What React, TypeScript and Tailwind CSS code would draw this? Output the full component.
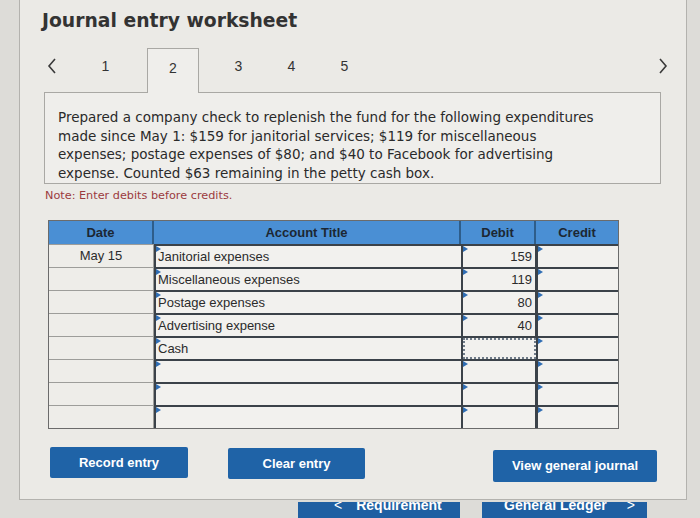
import React from 'react';

const rows = [
  { date: 'May 15', account: 'Janitorial expenses', debit: '159', credit: '' },
  { date: '', account: 'Miscellaneous expenses', debit: '119', credit: '' },
  { date: '', account: 'Postage expenses', debit: '80', credit: '' },
  { date: '', account: 'Advertising expense', debit: '40', credit: '' },
  { date: '', account: 'Cash', debit: '', credit: '' },
  { date: '', account: '', debit: '', credit: '' },
  { date: '', account: '', debit: '', credit: '' },
  { date: '', account: '', debit: '', credit: '' },
];

const Marker = () => (
  <span className="absolute left-0 top-0 h-0 w-0 border-y-[3px] border-l-[5px] border-y-transparent border-l-[#2f6db3]" />
);

const Chevron = ({ dir }: { dir: 'left' | 'right' }) => (
  <svg width="10" height="16" viewBox="0 0 10 16" className="text-[#3a3a3a]">
    <polyline
      points={dir === 'left' ? '8,1 2,8 8,15' : '2,1 8,8 2,15'}
      fill="none"
      stroke="currentColor"
      strokeWidth="1.6"
    />
  </svg>
);

const tabs = [1, 2, 3, 4, 5];

export default function App() {
  return (
    <div className="w-[700px] h-[518px] overflow-hidden bg-[#dddcd8] font-['DejaVu_Sans',sans-serif]">
      {/* Worksheet panel */}
      <div className="ml-[19px] w-[668px] h-[500px] border-l border-r border-b border-[#b3b2ae] bg-[#ebeae6]">
        <h1 className="pt-[10px] pl-[22px] text-[18.75px] leading-[22px] font-bold text-[#333]">
          Journal entry worksheet
        </h1>

        {/* Tabs */}
        <div className="mt-[16px] flex h-[44px] items-start pl-[27px] pr-[18px] font-['Liberation_Sans',sans-serif] text-[14px] leading-[14px] text-[#333]">
          <div className="pt-[10px]">
            <Chevron dir="left" />
          </div>
          {tabs.map((t) =>
            t === 2 ? (
              <div
                key={t}
                className="relative z-10 ml-[15px] mr-[13px] h-[45px] w-[52px] border-l border-r border-t border-[#a9a8a4] bg-[#efeeeb] pt-[12px] text-center"
              >
                {t}
              </div>
            ) : (
              <div key={t} className={`${t === 1 ? 'ml-[22px]' : ''} h-[44px] w-[53px] pt-[11px] text-center`}>
                {t}
              </div>
            )
          )}
          <div className="ml-auto pt-[10px]">
            <Chevron dir="right" />
          </div>
        </div>

        {/* Question text */}
        <div className="ml-[24px] w-[617px] border border-[#a9a8a4] bg-[#efeeeb] pl-[13px] pt-[15px] pb-[1px] text-[13.5px] leading-[18.5px] text-[#2a2a2a]">
          Prepared a company check to replenish the fund for the following expenditures
          <br />
          made since May 1: $159 for janitorial services; $119 for miscellaneous
          <br />
          expenses; postage expenses of $80; and $40 to Facebook for advertising
          <br />
          expense. Counted $63 remaining in the petty cash box.
        </div>

        <p className="mt-[5px] ml-[25px] text-[11.25px] leading-[14px] text-[#9b3a3e]">Note: Enter debits before credits.</p>

        {/* Journal table */}
        <div className="mt-[17px] ml-[28px] w-[571px] border border-[#6b6b6b] font-['Liberation_Sans',sans-serif] text-[13px] text-[#2b2b2b]">
          <div className="grid h-[23px] grid-cols-[105px_307px_75px_82px] bg-[#4a8fd4] font-bold text-[#1c2733]">
            <div className="flex items-center justify-center border-r-2 border-[#2e5d8a]">Date</div>
            <div className="flex items-center justify-center border-r-2 border-[#2e5d8a]">Account Title</div>
            <div className="flex items-center justify-center border-r-2 border-[#2e5d8a]">Debit</div>
            <div className="flex items-center justify-center">Credit</div>
          </div>
          {rows.map((r, i) => (
            <div key={i} className="grid h-[23px] grid-cols-[105px_307px_75px_82px] bg-[#f2f1ee]">
              <div className="flex items-center justify-center border-r border-t border-[#9d9d9a] bg-[#eeede9]">
                {r.date}
              </div>
              <div className="relative flex items-center border-t-2 border-l-2 border-[#3b4249] pl-[2px]">
                <Marker />
                {r.account}
              </div>
              {i === 4 ? (
                <div className="border-t-2 border-l-2 border-[#3b4249] p-0">
                  <div className="h-full border-2 border-dotted border-[#6f7b88]" />
                </div>
              ) : (
                <div className="relative flex items-center justify-end border-t-2 border-l-2 border-r border-[#3b4249] pr-[3px]">
                  <Marker />
                  {r.debit}
                </div>
              )}
              <div className="relative flex items-center justify-end border-t-2 border-l-2 border-[#3b4249] pr-[3px]">
                <Marker />
                {r.credit}
              </div>
            </div>
          ))}
        </div>

        {/* Actions */}
        <div className="mt-[18px] flex items-start font-['Liberation_Sans',sans-serif] text-[13px] font-bold text-white">
          <button className="ml-[30px] h-[31px] w-[138px] rounded-[2px] bg-[#1f63a7]">Record entry</button>
          <button className="ml-[40px] mt-[1px] h-[31px] w-[137px] rounded-[2px] bg-[#1f63a7]">Clear entry</button>
          <button className="ml-[128px] mt-[3px] h-[32px] w-[164px] rounded-[2px] bg-[#1f63a7]">View general journal</button>
        </div>
      </div>

      <div className="mt-[2px] flex font-['Liberation_Sans',sans-serif] text-[14px] font-bold leading-[14px] text-white">
        <div className="ml-[298px] h-[30px] w-[162px] overflow-hidden bg-[#1f5fa2]">
          <div className="-mt-[4px] flex items-center gap-[14px] pl-[36px]">
            <span className="font-normal">&lt;</span>
            <span>Requirement</span>
          </div>
        </div>
        <div className="ml-[22px] h-[30px] w-[165px] overflow-hidden bg-[#1f5fa2]">
          <div className="-mt-[4px] flex items-center gap-[20px] pl-[22px]">
            <span>General Ledger</span>
            <span className="font-normal">&gt;</span>
          </div>
        </div>
      </div>
    </div>
  );
}
